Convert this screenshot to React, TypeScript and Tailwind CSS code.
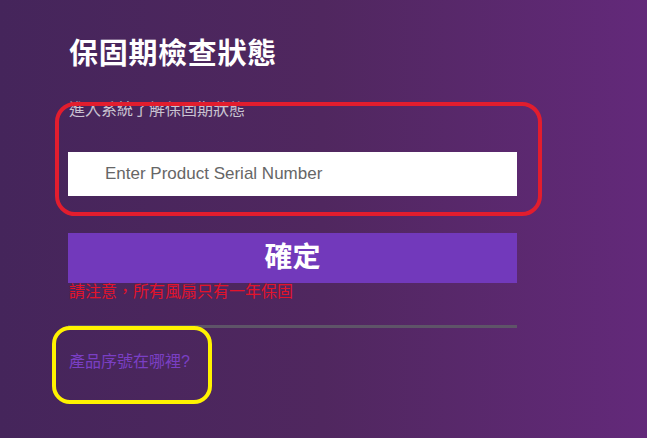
export default function App() {
  return (
    <div className="relative h-[438px] w-[647px] overflow-hidden bg-gradient-to-r from-[#45255b] via-[#50275f] to-[#63297a] font-['Liberation_Sans','Noto_Sans_CJK_TC',sans-serif]">
      <div className="w-[449px] pl-[68px] pt-[36px] box-content">
        {/* 標題 */}
        <h1 className="pl-px text-[29px] font-bold leading-[36px] tracking-[0.7px] text-white">
          保固期檢查狀態
        </h1>
        <p className="mt-[29px] pl-px text-[16px] leading-[18px] text-[#c9c2d0]">
          進入系統了解保固期狀態
        </p>

        {/* 輸入框 */}
        <input
          type="text"
          placeholder="Enter Product Serial Number"
          className="mt-[33px] block h-[44px] w-[449px] bg-white pl-[37px] text-[17px] text-[#333] placeholder-[#666] outline-none"
        />

        <button
          type="button"
          className="mt-[37px] block h-[50px] w-[449px] bg-[#7239bb] text-[28px] font-bold leading-[50px] text-white"
        >
          確定
        </button>
        <p className="pl-px text-[16px] leading-[18px] text-[#e3132b]">
          請注意，所有風扇只有一年保固
        </p>

        <div className="mt-[24px] h-[3px] w-[449px] bg-[#5e5468]" />

        <a href="#" className="mt-[25px] block pl-px text-[16px] leading-[18px] text-[#7a3fc4]">
          產品序號在哪裡?
        </a>
      </div>

      {/* 標註框 */}
      <div className="pointer-events-none absolute left-[55px] top-[102px] h-[114px] w-[487px] rounded-[20px] border-4 border-[#e21d2e]" />
      <div className="pointer-events-none absolute left-[52px] top-[326px] h-[78px] w-[160px] rounded-[18px] border-4 border-[#fff200]" />
    </div>
  );
}
